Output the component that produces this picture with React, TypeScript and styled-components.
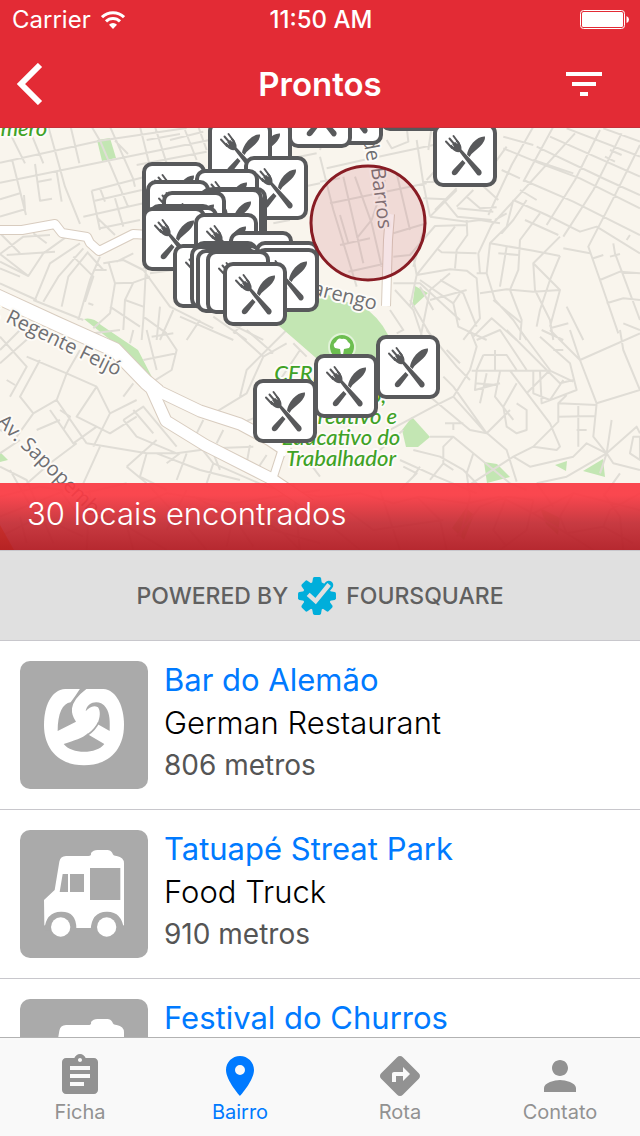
import React from "react";
import styled, { createGlobalStyle } from "styled-components";
import { MdAssignment, MdDirections, MdFilterList, MdPerson, MdPlace } from "react-icons/md";

const GlobalStyle = createGlobalStyle`
  * { box-sizing: border-box; }
  html, body { margin: 0; padding: 0; }
  body {
    font-family: Inter, "Liberation Sans", sans-serif;
    background: #ffffff;
  }
  button { font: inherit; border: 0; padding: 0; background: none; cursor: pointer; }
`;

const Screen = styled.div`
  display: flex;
  flex-direction: column;
  height: 100vh;
  overflow: hidden;
`;

const Header = styled.header`
  flex: none;
  background: #e32b35;
  color: #ffffff;
`;

const StatusBar = styled.div`
  display: grid;
  grid-template-columns: 1fr auto 1fr;
  align-items: center;
  height: 40px;
  padding: 0 10px 0 12px;
  font-size: 24px;
  line-height: 32px;
`;

const Carrier = styled.span`
  display: flex;
  align-items: center;
  gap: 10px;
`;

const Clock = styled.time`
  font-weight: 500;
`;

const BatterySlot = styled.span`
  display: flex;
  justify-content: flex-end;
`;

const NavBar = styled.div`
  display: grid;
  grid-template-columns: 48px 1fr 48px;
  align-items: center;
  height: 88px;
  padding: 0 32px 0 16px;
  border-bottom: 1px solid #c5303a;
`;

const NavButton = styled.button`
  display: flex;
  align-items: center;
  height: 48px;
  color: #ffffff;
`;

const Title = styled.h1`
  margin: 0;
  padding-left: 16px;
  text-align: center;
  font-size: 33px;
  line-height: 40px;
  font-weight: 600;
`;

const MapPane = styled.section`
  position: relative;
  flex: none;
  height: 422px;
  overflow: hidden;
  background: #f9f5ed;
`;

const MapDrawing = styled.svg`
  display: block;
  width: 100%;
  height: 100%;
`;

const CountBanner = styled.p`
  position: absolute;
  left: 0;
  right: 0;
  bottom: 0;
  height: 67px;
  margin: 0;
  padding: 11px 27px;
  color: #ffffff;
  font-size: 31px;
  line-height: 40px;
  font-weight: 300;
  background: linear-gradient(rgba(250, 58, 67, 0.93) 0%, rgba(250, 58, 67, 0.93) 18%, rgba(194, 38, 47, 0.9) 60%, rgba(178, 28, 36, 0.94) 100%);
`;

const Attribution = styled.div`
  flex: none;
  display: flex;
  align-items: center;
  justify-content: center;
  gap: 8px;
  height: 91px;
  border-top: 1px solid #c8c7cc;
  border-bottom: 1px solid #c8c7cc;
  background: #e0e0e0;
  color: #606060;
  font-size: 23px;
  line-height: 28px;
  font-weight: 500;
`;

const VenueList = styled.ul`
  flex: 1;
  min-height: 0;
  overflow: hidden;
  margin: 0;
  padding: 0;
  list-style: none;
`;

const VenueRow = styled.li`
  display: flex;
  gap: 16px;
  padding: 20px;
  border-bottom: 1px solid #c8c7cc;
`;

const Thumb = styled.svg`
  flex: none;
  width: 128px;
  height: 128px;
  border-radius: 10px;
  background: #aaaaaa;
`;

const VenueText = styled.div`
  flex: 1;
  min-width: 0;
`;

const VenueName = styled.a`
  display: block;
  color: #007aff;
  font-size: 31px;
  line-height: 38px;
  text-decoration: none;
`;

const Category = styled.div`
  color: #000000;
  font-size: 31px;
  line-height: 48px;
  font-weight: 300;
`;

const Distance = styled.div`
  color: #555555;
  font-size: 28px;
  line-height: 36px;
`;

const TabBar = styled.nav`
  flex: none;
  display: grid;
  grid-template-columns: repeat(4, 1fr);
  height: 99px;
  padding-top: 14px;
  border-top: 1px solid #b2b2b2;
  background: #f9f9f9;
`;

const Tab = styled.button<{ $active?: boolean }>`
  display: flex;
  flex-direction: column;
  align-items: center;
  color: ${(p) => (p.$active ? "#007aff" : "#929292")};
  font-size: 20px;
  line-height: 24px;
`;

function WifiIcon() {
  return (
    <svg width="24" height="18" viewBox="0 0 24 18" fill="none" stroke="#fff" strokeWidth="3" aria-hidden="true">
      <path d="M1 6.200a15.600 15.600 0 0 1 22 0" />
      <path d="M5 10.400a9.900 9.900 0 0 1 14 0" />
      <path d="M12 18l-4-4.200a5.600 5.600 0 0 1 8 0z" fill="#fff" stroke="none" />
    </svg>
  );
}

function BatteryIcon() {
  return (
    <svg width="50" height="20" viewBox="0 0 50 20" aria-hidden="true">
      <rect x="0.5" y="0.5" width="44" height="18" rx="3" fill="none" stroke="#fff" />
      <rect x="2" y="2" width="41" height="15" rx="1.5" fill="#fff" />
      <path d="M46.5 6q2.5 1 2.5 3.500t-2.500 3.500z" fill="#fff" />
    </svg>
  );
}

function FoursquareMark() {
  return (
    <svg width="42" height="42" viewBox="-62 -62 124 124" aria-hidden="true">
      <g fill="#00aedb">
        <circle r="42" />
        {[0, 90, 135, 180, 225, 270, 315].map((a) => (
          <path key={a} d="M-15-34L-12-52Q-11-56-7-56H7Q11-56 12-52L15-34Z" transform={`rotate(${a})`} />
        ))}
      </g>
      <path d="M-20-1L-3 14L35-32" fill="none" stroke="#00aedb" strokeWidth="26" strokeLinejoin="round" strokeLinecap="round" />
      <path d="M-26-5L-4 15L36-34" fill="none" stroke="#e0e0e0" strokeWidth="13" />
    </svg>
  );
}

function PretzelThumb() {
  return (
    <Thumb viewBox="60 63 384 384" aria-hidden="true">
      <path fill="#fff" d="M196 147H310C350 150 372 200 372 255C372 330 325 376 252 376C179 376 132 330 132 255C132 200 152 150 196 147Z" />
      <g fill="#aaa">
        <path d="M240 146Q226 168 212 187C188 190 173 220 173 273L228 245Q214 226 216 205Q220 176 260 146Z" />
        <path d="M257 214C262 182 302 178 318 203C330 220 330 245 329 273L292 252C301 232 302 214 294 202C280 194 268 202 257 214Z" />
        <path d="M191 312C225 301 245 296 264 280L267 285L313 312C290 343 215 343 191 312Z" />
      </g>
      <path d="M296 247Q286 268 264 284" fill="none" stroke="#aaa" strokeWidth="5" />
    </Thumb>
  );
}

function TruckThumb() {
  return (
    <Thumb viewBox="60 60 384 384" aria-hidden="true">
      <path fill="#fff" d="M133 345L132 270L164 240L178 155Q181 139 198 138H265Q275 138 273 129Q280 120 292 120H322Q332 120 337 129Q339 138 350 138Q372 142 372 160V345L360 354H140Z" />
      <g fill="#aaa">
        <path d="M188 192H204V246H179ZM210 192H252V246H210ZM270 174H361V270H270Z" />
        <path d="M133 360Q137 306 183 305T229 355V362ZM272 360Q274 306 320 305T372 360Z" />
      </g>
      <circle cx="182" cy="351" r="29" fill="#fff" />
      <circle cx="320" cy="351" r="29" fill="#fff" />
    </Thumb>
  );
}

/* Street lines, one entry for each map tile; a tile is drawn in thirds of a pixel. */
const streetTiles = [
  {
    origin: [0, 120],
    d: `M0 128L300 62L560 24 M0 188L345 118L640 58 M0 238L60 220 M0 290L75 268L72 225 M20 20L75 130 M36 118L78 285 M105 132L120 242L156 236
    M85 20L130 130 M115 185L155 178 M145 20L195 200L240 312 M212 20L238 130 M275 20L300 62L385 262 M330 20L402 182 M345 62L384 102 M170 155L185 245
    M275 212L430 172 M275 212L300 330 M285 242L425 210 M250 290L430 250 M290 292L345 345 M300 325L420 300 M345 235L370 320 M300 205L315 245
    M420 20L450 140 M465 20L500 130 M510 60L610 35 M400 180L405 200 M410 135L620 95 M440 60L540 42 M555 30L590 120 M595 20L620 90
    M0 402L70 350L150 345 M0 402L85 468L0 425 M20 405L165 395 M100 340L140 370 M0 445L60 470 M85 468L130 400L200 350 M105 540L150 430L240 370
    M130 545L175 470L250 385 M185 560L205 470L265 395 M220 410L280 470L255 545 M265 400L310 450 M300 410L270 480L235 600 M310 430L370 420L430 450
    M325 425L345 490L330 580L280 625 M345 490L400 488L450 470 M400 400L350 425 M400 488L375 540L370 630 M440 400L430 600L425 660 M330 560L420 620
    M375 540L430 560 M450 460L520 450 M430 450L510 560L640 625 M480 560L470 660 M520 570L480 660 M500 640L430 590 M540 590L700 660 M640 590L740 660 M690 610L790 660
    M700 640L730 610 M600 600L560 660 M100 540L250 600 M0 490L110 540 M265 550L280 555 M280 450L320 450 M0 340L60 400 M930 60L960 58 M820 310L870 300 M800 130L950 100 M910 200L960 190 M520 420L430 445`,
  },
  {
    origin: [320, 120],
    d: `M20 20L0 90 M0 110L40 270L110 500 M20 145L130 120L340 75 M0 185L60 175 M30 250L320 190 M70 170L130 430 M105 170L155 310L185 440 M60 375L150 355 M60 285L85 370
    M110 355L155 300L195 180 M85 455L200 430 M230 160L270 330 M220 340L320 310 M200 60L215 85L265 65L260 20 M290 60L310 190L330 290 M310 185L400 187 M310 235L380 238 M335 20L325 90
    M330 290L410 210 M330 290L440 305L480 300L540 310 M315 315L280 440 M220 410L270 405L345 318L440 315 M280 410L290 465L405 320 M290 465L270 560 M290 465L390 448L440 452L470 475L480 595L430 660
    M350 385L365 397L470 400 M440 300L442 345L410 390L405 445 M375 245L412 290L515 300 M412 265L520 275 M440 230L480 265L530 262 M460 210L410 260 M345 270L410 205
    M640 20L575 135L505 285 M700 20L610 185 M765 40L515 315L475 400L480 460 M560 80L480 190L535 240 M840 30L765 180L680 315 M905 40L820 210L730 350 M960 75L880 235L805 380L840 480L895 640
    M550 50L640 75 M550 85L660 130L780 175L960 265 M545 150L600 175 M610 180L760 245L960 345 M640 120L760 160 M650 80L860 180L960 225 M690 50L960 170 M740 25L960 110 M850 25L960 65
    M580 240L680 285L780 335L830 320L960 400 M600 210L650 240 M615 300L715 345 M580 240L560 320L510 370L500 460L525 540L580 600L620 660 M620 240L580 300L545 340
    M510 370L640 392L720 408 M660 280L600 360L595 450L570 510 M560 380L540 500 M720 350L640 430L645 510L690 600L700 660 M640 430L720 510L690 620 M720 408L690 480L660 570L650 620
    M730 385L810 400 M880 370L885 400L960 600 M480 520L560 508L640 515L720 510 M470 460L500 460 M340 570L300 500 M220 490L300 490L420 600 M360 480L430 520L470 620 M390 460L330 510L300 660
    M440 510L330 540 M420 520L400 550L415 620L500 660 M270 540L340 660 M300 480L400 550 M460 650L515 595L590 660 M570 510L605 600L600 660 M520 540L605 610 M690 625L745 610
    M740 560L790 660 M840 480L900 455L960 460 M860 550L910 535L960 540 M910 610L960 630 M225 510L280 570L310 660 M210 570L250 630L230 640 M870 410L900 402 M820 415L850 405 M930 345L920 360 M320 180L365 130 M560 280L525 300 M535 400L595 405 M855 110L885 125 M870 90L905 105`,
  },
  {
    origin: [0, 330],
    d: `M0 60L60 0 M0 100L90 20 M20 150L45 165 M0 20L80 110L30 200 M80 80L200 130L290 170 M120 90L60 200L100 250L170 210 M200 130L170 210L260 340 M200 130L240 60 M290 170L330 250L410 210
    M290 170L230 260L330 310L410 260 M180 240L210 260L190 300 M100 250L50 320 M150 240L220 340L290 290 M110 300L180 270 M330 250L280 350 M0 370L60 330 M0 300L20 310 M370 270L430 230L530 350 M370 270L410 320L530 370L640 355L760 350
    M400 240L460 310 M230 340L150 400L70 470 M300 350L250 460 M260 340L440 370L540 370 M380 410L470 330 M380 410L440 460 M440 370L420 440L500 480 M470 370L600 420L720 450 M540 370L500 400 M560 370L530 450 M600 350L640 400L620 460
    M0 410L80 450L160 640 M30 420L110 560 M0 500L120 470L250 490L380 460 M640 370L660 420 M610 270L590 310 M670 300L650 340 M750 345L740 400 M800 375L770 420 M900 290L960 350 M850 340L930 400L960 440
    M280 10L360 0 M390 40L400 0 M440 0L470 120 M455 20L520 10 M490 0L530 60L515 120L450 160 M430 90L530 70 M400 160L370 200 M700 0L790 80L860 40 M740 0L820 70 M790 80L740 190L650 245 M860 0L740 120L720 200 M720 280L760 265L800 290
    M860 0L960 90 M880 40L920 80 M900 60L840 150 M640 400L800 470L960 500 M0 560L200 480L330 560L500 490L700 520L960 480 M270 480L260 660 M180 480L260 590L370 550L400 660 M330 560L500 660 M450 470L560 590L620 660 M560 480L500 600
    M580 500L700 560L760 650 M700 560L680 650 M740 540L850 610L900 660 M640 550L960 640 M0 620L120 560L250 620 M60 560L80 640 M880 460L900 660`,
  },
  {
    origin: [320, 330],
    d: `M320 0L410 110L450 150 M450 0L470 50L450 120L400 200L340 230L210 300 M470 30L540 0L620 120 M560 0L720 160L760 150 M600 0L690 120L620 190 M455 122L690 122L760 155 M470 122L465 180L540 160 M490 75L560 75L590 120 M490 75L470 120 M525 60V120
    M380 60L420 100 M370 140L400 170L500 310 M400 200L490 300L560 360L590 455 M330 200L450 300L500 310L570 240 M465 160L530 165 M500 130L480 220 M540 125L525 200L580 270 M570 122L690 280L720 350L710 360L640 350L580 380L440 470
    M590 160L550 230L560 290L590 310L620 300L620 240L590 220 M660 122L665 220L770 180L750 100L660 20 M640 122L640 190L690 210 M700 60L730 60 M665 0L730 30 M690 0L780 90L830 220L820 320L860 370L880 400L960 420 M780 90L960 10
    M750 0L780 90 M900 0L910 60L960 180 M830 220L960 180 M715 220L830 225 M715 260L825 258 M740 195L715 220L715 275L640 350 M775 220L775 350 M730 150L690 210 M770 300L800 300 M860 370L950 290L960 310 M860 370L800 340L760 380L630 410L580 380
    M860 370L740 440L650 460 M875 270L860 370L840 430 M940 320L960 320L960 390L930 370Z M330 320L400 320L460 370L570 460L620 480 M375 280L430 280 M400 280L400 300 M400 320L370 350V400L330 450 M280 360L360 380L430 420L490 480 M250 300L180 360
    M250 410L290 430L240 480 M240 390L350 440L470 490 M300 410L280 440 M460 370L440 430L450 500L420 620 M370 400L400 420 M0 500L120 490L220 520L300 500L440 520L540 500L640 550L760 490L960 540 M0 560L120 660 M80 540L160 600L370 570 M180 480L240 660
    M290 500L360 570L380 660 M410 620L480 530L560 500L640 510 M560 500L520 600L560 650 M640 510L620 600L540 660 M640 550L740 610L820 660 M760 490L720 560L740 610L850 590L940 640 M850 490L900 560L910 660 M900 430L850 500 M650 460L700 530 M850 590L870 540L960 490`,
  },
];

const markers: [number, number][] = [
  [380, 67], [319, 81], [288, 84], [228, 120], [208, 121], [433, 123], [244, 156],
  [142, 162], [195, 169], [146, 180], [203, 187], [199, 188], [162, 191], [149, 204],
  [154, 206], [142, 207], [194, 213], [229, 231], [194, 241], [255, 241], [190, 243],
  [197, 244], [173, 244], [190, 245], [255, 248], [196, 249], [206, 250],
  [223, 262], [376, 335], [314, 354], [253, 379],
];

function Marker({ x, y }: { x: number; y: number }) {
  return (
    <g transform={`translate(${x} ${y})`}>
      <rect x="2" y="2" width="60" height="60" rx="8" fill="#fff" stroke="#58595b" strokeWidth="4" />
      <g fill="#58595b">
        <path d="M17 23L24.500 17Q29 22 28.500 26.500L48 47.500Q49.500 50 47.500 52Q45 53.500 43.500 51L26.500 29Q21 30 17 23Z" />
        <path d="M52 13.500Q52.500 18 47 23.500L38.500 31L36.500 34L34 31.500Q35 25.500 40 19.500Q46 13 52 13.500Z" />
        <path d="M29.500 37L32.500 40L24 51Q21 53.500 19 51Q18 49 20 47Z" />
      </g>
      <path d="M13 18.500L19 25M16.500 15.500L22.500 22.500M20.500 13L26 20.500" fill="none" stroke="#58595b" strokeWidth="2" strokeLinecap="round" />
      <path d="M18.500 21L20.500 23.500M22 18L24 20.500" fill="none" stroke="#fff" strokeWidth="1" />
    </g>
  );
}

const parks = [
  "M97 140L110 138L116 158L102 161Z",
  "M84 319Q93 317 101 325L138 350L155 383L146 376L118 346Z",
  "M402 430L412 417L430 437L418 447L406 447Z",
  "M412 308L415 286L428 293Z",
  "M484 462L497 464L510 477L487 483Z",
  "M583 471L603 459L605 477Z",
  "M555 465L567 461L566 471Z",
  "M0 452L8 460L0 462Z",
  "M452 528L466 508L474 515L464 540Z",
  "M540 508L560 518L558 535L546 524Z",
];

const mainRoads = [
  { w: 8, d: "M-5 230L22 230L55 224L62 233L87 237L90 243L99 251L133 234L150 235" },
  { w: 14, d: "M-8 294L55 323L115 350L146 382L158 392" },
  { w: 11, d: "M152 388L200 411L240 424L270 440L288 452" },
  { w: 11, d: "M152 390L166 421L205 445L270 478L310 505" },
  { w: 7, d: "M282 450L273 478L303 500" },
  { w: 8, d: "M390 214L388 240L386 306" },
];

function AreaMap() {
  const roads = (color: string, extra: number) =>
    mainRoads.map((r) => <path key={r.d} d={r.d} stroke={color} strokeWidth={r.w + extra} />);
  return (
    <MapDrawing viewBox="0 128 640 422" preserveAspectRatio="xMidYMid slice" role="img" aria-label="Mapa do bairro">
      <rect y="128" width="640" height="422" fill="#f9f5ed" />
      <g fill="#c3e6b3">
        {parks.map((d) => (
          <path key={d} d={d} />
        ))}
      </g>
      {streetTiles.map((t) => (
        <path
          key={t.origin.join()}
          transform={`translate(${t.origin[0]} ${t.origin[1]}) scale(0.3333)`}
          d={t.d}
          fill="none"
          stroke="#e0ddd6"
          strokeWidth="6"
          strokeLinejoin="round"
        />
      ))}
      <path d="M270 318L287 300L320 292Q347 302 368 310Q386 325 392 345L390 396L330 370Z" fill="#c3e6b3" />
      <path d="M0 525L14 550H0Z" fill="#ff8c1a" />
      <g fill="none" strokeLinejoin="round">
        {roads("#d8ccbf", 2)}
        {roads("#ffffff", 0)}
      </g>
      <g fontFamily="'Open Sans', sans-serif" fill="#6f6f72" stroke="#fdfbf7" strokeWidth="4" strokeLinejoin="round" style={{ paintOrder: "stroke" }} fontSize="20">
        <text transform="translate(-25 307) rotate(26)">Av. Regente Feijó</text>
        <text transform="translate(-4 423) rotate(44)">Av. Sapopemba</text>
        <text transform="translate(294 290) rotate(14)">Marengo</text>
        <text transform="translate(363 139) rotate(79)">de</text>
        <text transform="translate(371 168) rotate(83)">Barros</text>
      </g>
      <g fontFamily="Lato, sans-serif" fontStyle="italic" fontWeight="500" fill="#3fa226" stroke="#fdfbf7" strokeWidth="4" strokeLinejoin="round" style={{ paintOrder: "stroke" }} fontSize="22" textAnchor="middle">
        <text x="24" y="136">mero</text>
        <text x="345" y="381">CERET - Centro</text>
        <text x="341" y="403">Esportivo,</text>
        <text x="341" y="424">Recreativo e</text>
        <text x="341" y="445">Educativo do</text>
        <text x="341" y="466">Trabalhador</text>
      </g>
      <circle cx="342" cy="347" r="13" fill="#6cbe50" stroke="#e2f3d9" strokeWidth="2" />
      <path d="M335 348Q332 344 336 342Q338 337 342 339Q346 338 348 342Q352 344 349 348L344 349L343 355H341L340 349Z" fill="#fff" />
      {markers.map(([x, y]) => (
        <Marker key={`${x}-${y}`} x={x} y={y} />
      ))}
      <circle cx="368" cy="223" r="57" fill="#c8646e" fillOpacity="0.18" stroke="#881c24" strokeWidth="3" />
    </MapDrawing>
  );
}

const venues = [
  { name: "Bar do Alemão", category: "German Restaurant", distance: "806 metros", Icon: PretzelThumb },
  { name: "Tatuapé Streat Park", category: "Food Truck", distance: "910 metros", Icon: TruckThumb },
  { name: "Festival do Churros", category: "", distance: "", Icon: TruckThumb },
];

const tabs = [
  { label: "Ficha", Icon: MdAssignment },
  { label: "Bairro", Icon: MdPlace, active: true },
  { label: "Rota", Icon: MdDirections },
  { label: "Contato", Icon: MdPerson },
];

export default function App() {
  return (
    <Screen>
      <GlobalStyle />
      <Header>
        <StatusBar>
          <Carrier>
            Carrier
            <WifiIcon />
          </Carrier>
          <Clock>11:50 AM</Clock>
          <BatterySlot>
            <BatteryIcon />
          </BatterySlot>
        </StatusBar>
        <NavBar>
          <NavButton aria-label="Voltar">
            <svg width="28" height="42" viewBox="0 0 28 42" fill="none" stroke="#fff" strokeWidth="6" aria-hidden="true">
              <path d="M24 2L5 21L24 40" />
            </svg>
          </NavButton>
          <Title>Prontos</Title>
          <NavButton aria-label="Filtrar">
            <MdFilterList size={48} />
          </NavButton>
        </NavBar>
      </Header>
      <MapPane>
        <AreaMap />
        <CountBanner>30 locais encontrados</CountBanner>
      </MapPane>
      <Attribution>
        <span>POWERED BY</span>
        <FoursquareMark />
        <span>FOURSQUARE</span>
      </Attribution>
      <VenueList>
        {venues.map(({ name, category, distance, Icon }) => (
          <VenueRow key={name}>
            <Icon />
            <VenueText>
              <VenueName href="#">{name}</VenueName>
              {category && <Category>{category}</Category>}
              {distance && <Distance>{distance}</Distance>}
            </VenueText>
          </VenueRow>
        ))}
      </VenueList>
      <TabBar>
        {tabs.map(({ label, Icon, active }) => (
          <Tab key={label} $active={active}>
            <Icon size={48} />
            {label}
          </Tab>
        ))}
      </TabBar>
    </Screen>
  );
}
